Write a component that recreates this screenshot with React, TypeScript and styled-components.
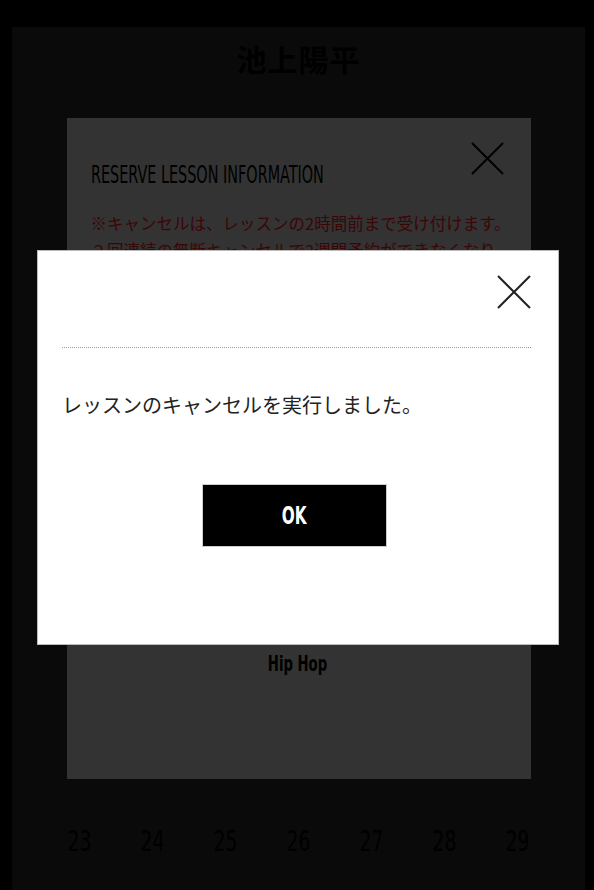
import React from "react";
import styled, { createGlobalStyle } from "styled-components";

const GlobalStyle = createGlobalStyle`
  html, body {
    margin: 0;
    padding: 0;
    background: #000;
  }
  body {
    font-family: "Noto Sans CJK JP", "Noto Sans", sans-serif;
  }
`;

const condensed = `"DejaVu Sans Condensed", "Liberation Sans Narrow", "DejaVu Sans", sans-serif`;

const Screen = styled.div`
  width: 594px;
  height: 890px;
  overflow: hidden;
  background: #000;
  padding: 27px 9px 0 12px;
  box-sizing: border-box;
`;

const Page = styled.div`
  background: #222;
  height: 100%;
  display: flex;
  flex-direction: column;
  align-items: center;
`;

const Title = styled.h1`
  margin: 14px 0 0;
  font-size: 30px;
  font-weight: 700;
  line-height: 34px;
  color: #000;
  letter-spacing: 1px;
`;

const InfoPanel = styled.section`
  margin-top: 43px;
  width: 464px;
  height: 661px;
  background: #aaa;
  padding: 24px 27px 0 24px;
  box-sizing: border-box;
  display: flex;
  flex-direction: column;
`;

const PanelHead = styled.div`
  display: flex;
  justify-content: space-between;
  align-items: flex-start;
`;

const PanelTitle = styled.h2`
  margin: 18px 0 0;
  font-family: ${condensed};
  font-weight: 400;
  font-size: 25px;
  line-height: 30px;
  color: #000;
  transform: scaleX(0.64);
  transform-origin: left center;
  white-space: nowrap;
`;

const Notice = styled.p`
  margin: 20px 0 0;
  font-size: 16.5px;
  line-height: 27px;
  color: #c41414;
  white-space: nowrap;
`;

const Genre = styled.div`
  margin-top: auto;
  margin-bottom: 103px;
  text-align: center;
  font-family: ${condensed};
  font-weight: 700;
  font-size: 21px;
  color: #000;
  transform: scaleX(0.7);
`;

const DateRow = styled.div`
  margin-top: 46px;
  width: 511px;
  display: grid;
  grid-template-columns: repeat(7, 1fr);
`;

const DateCell = styled.span`
  text-align: center;
  font-family: ${condensed};
  font-size: 29px;
  line-height: 32px;
  color: #000;
  transform: scaleX(0.72);
`;

const Overlay = styled.div`
  position: fixed;
  inset: 0;
  background: rgba(0, 0, 0, 0.7);
  display: flex;
  align-items: center;
  justify-content: center;
`;

const Modal = styled.div`
  width: 522px;
  height: 395px;
  margin-top: 5px;
  margin-left: 2px;
  background: #fff;
  border: 1px solid #bbb;
  box-sizing: border-box;
  padding: 24px 27px 0 24px;
  display: flex;
  flex-direction: column;
`;

const ModalHead = styled.div`
  display: flex;
  justify-content: flex-end;
  padding-bottom: 38px;
  border-bottom: 1px dotted #999;
`;

const CloseButton = styled.button<{ $size: number; $color: string }>`
  width: ${(p) => p.$size}px;
  height: ${(p) => p.$size}px;
  padding: 0;
  border: 0;
  background: none;
  cursor: pointer;
  svg {
    display: block;
    stroke: ${(p) => p.$color};
  }
`;

const Message = styled.p`
  margin: 43px 0 0;
  font-size: 20px;
  line-height: 28px;
  color: #222;
`;

const OkButton = styled.button`
  align-self: center;
  margin-top: 65px;
  margin-right: 4px;
  width: 185px;
  height: 63px;
  background: #000;
  border: 1px solid #ccc;
  color: #fff;
  font-family: ${condensed};
  font-size: 25px;
  font-weight: 700;
  cursor: pointer;
  span {
    display: inline-block;
    transform: scaleX(0.68);
  }
`;

function CloseIcon({ size, color }: { size: number; color: string }) {
  return (
    <CloseButton $size={size} $color={color} aria-label="close">
      <svg width={size} height={size} viewBox="0 0 34 34" fill="none" strokeWidth="2">
        <path d="M1 1L33 33M33 1L1 33" />
      </svg>
    </CloseButton>
  );
}

const dates = [23, 24, 25, 26, 27, 28, 29];

export default function App() {
  return (
    <>
      <GlobalStyle />
      <Screen>
        <Page>
          <Title>池上陽平</Title>
          <InfoPanel>
            <PanelHead>
              <PanelTitle>RESERVE LESSON INFORMATION</PanelTitle>
              <CloseIcon size={33} color="#000" />
            </PanelHead>
            <Notice>
              ※キャンセルは、レッスンの2時間前まで受け付けます。
              <br />
              ２回連続の無断キャンセルで2週間予約ができなくなり
            </Notice>
            <Genre>Hip Hop</Genre>
          </InfoPanel>
          <DateRow>
            {dates.map((d) => (
              <DateCell key={d}>{d}</DateCell>
            ))}
          </DateRow>
        </Page>
      </Screen>
      <Overlay>
        <Modal>
          <ModalHead>
            <CloseIcon size={34} color="#222" />
          </ModalHead>
          <Message>レッスンのキャンセルを実行しました。</Message>
          <OkButton>
            <span>OK</span>
          </OkButton>
        </Modal>
      </Overlay>
    </>
  );
}
